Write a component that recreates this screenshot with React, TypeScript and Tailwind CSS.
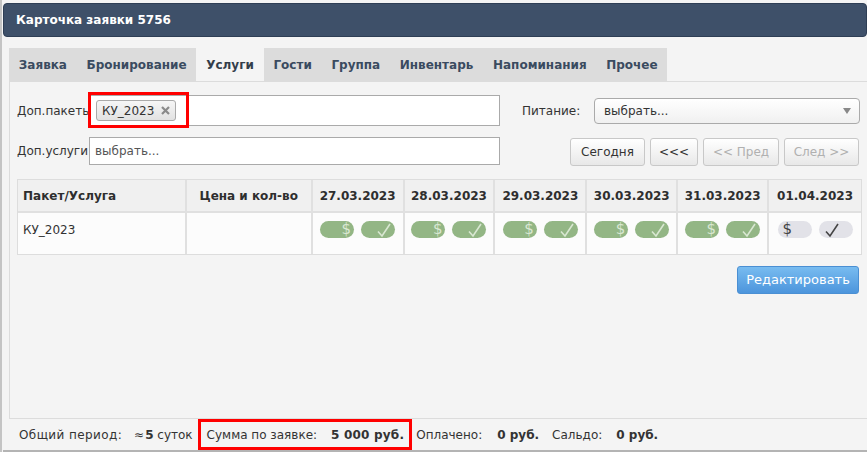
import React from "react";

const tabs = ["Заявка", "Бронирование", "Услуги", "Гости", "Группа", "Инвентарь", "Напоминания", "Прочее"];
const dates = ["27.03.2023", "28.03.2023", "29.03.2023", "30.03.2023", "31.03.2023", "01.04.2023"];
const dateWidths = ["w-[92px]", "w-[91px]", "w-[92px]", "w-[91px]", "w-[91px]", "w-[92px]"];

function Pill({ on, kind }: { on: boolean; kind: "pay" | "check" }) {
  const base = on ? "bg-[#93b685] text-[#d9e7d2]" : "bg-[#e2e2e8] text-[#444]";
  if (kind === "pay") {
    return (
      <span className={`relative flex h-[17px] w-[34px] items-center rounded-full ${base} overflow-hidden`}>
        <span className={`absolute ${on ? "right-[3px]" : "left-[5px]"} top-[-1px] text-[15px] leading-[18px]`}>$</span>
      </span>
    );
  }
  return (
    <span className={`relative flex h-[17px] w-[34px] items-center rounded-full ${base} overflow-hidden`}>
      <svg
        className={`absolute ${on ? "right-[3px]" : "left-[5px]"} top-[1px]`}
        width="16"
        height="16"
        viewBox="0 0 16 16"
        fill="none"
        stroke="currentColor"
        strokeWidth="1.6"
      >
        <path d="M2 9.5 L6 14 L14 2" />
      </svg>
    </span>
  );
}

function Btn({ children, disabled, w }: { children: React.ReactNode; disabled?: boolean; w: string }) {
  return (
    <button
      className={`${w} h-[28px] rounded-[3px] border border-[#c8c8c8] bg-gradient-to-b from-[#ffffff] to-[#e8e8e8] text-[12px] ${
        disabled ? "text-[#b0b0b0]" : "text-[#333]"
      }`}
    >
      {children}
    </button>
  );
}

export default function App() {
  return (
    <div
      className="w-[867px] h-[452px] overflow-hidden bg-[#f4f4f4] border-l-2 border-[#c4c4c4] pt-[3px] pl-[1px] text-[#333]"
      style={{ fontFamily: '"DejaVu Sans", Verdana, sans-serif' }}
    >
      {/* Header */}
      <div className="h-[34px] rounded-[4px] border border-[#2e3e55] bg-[#3e5069] flex items-center pl-[12px]">
        <span className="text-white font-bold text-[12px]">Карточка заявки 5756</span>
      </div>

      <div className="pl-[6px] mt-[11px]">
        {/* Tabs */}
        <div className="flex h-[34px] border-b border-[#dcdcdc]">
          <div className="flex bg-[#dcdcdc]">
            {tabs.map((t) => (
              <div
                key={t}
                className={`flex items-center px-[9.8px] text-[12px] font-bold ${
                  t === "Услуги" ? "bg-[#f4f4f4] text-[#333d4a]" : "text-[#3a4b60]"
                }`}
              >
                {t}
              </div>
            ))}
          </div>
        </div>

        {/* Panel */}
        <div className="h-[337px] border-l border-b border-[#dcdcdc] pl-[7px] pr-[6px] pt-[13px]">
          {/* Row 1 */}
          <div className="flex items-center h-[31px]">
            <div className="w-[72px] overflow-hidden whitespace-nowrap text-[12px]">Доп.пакеты</div>
            <div className="relative w-[411px] h-[31px] border border-[#aaaaaa] bg-white flex items-center pl-[6px]">
              <span className="flex items-center gap-[7px] h-[21px] rounded-[3px] border border-[#aaaaaa] bg-gradient-to-b from-[#f6f6f6] to-[#e2e2e2] pl-[5px] pr-[5px] text-[12px]">
                КУ_2023
                <svg width="9" height="9" viewBox="0 0 9 9" stroke="#8a8a8a" strokeWidth="2.2">
                  <path d="M1 1 L8 8 M8 1 L1 8" />
                </svg>
              </span>
              <div className="absolute left-[-2px] top-[-4px] w-[101px] h-[36px] border-[3px] border-[#f00]" />
            </div>
            <div className="ml-[22px] text-[12px] w-[72px]">Питание:</div>
            <div className="flex items-center justify-between w-[266px] h-[26px] rounded-[4px] border border-[#aaaaaa] bg-gradient-to-b from-white to-[#f0f0f0] pl-[9px] pr-[8px] text-[12px]">
              <span>выбрать...</span>
              <span className="w-0 h-0 border-l-[4px] border-r-[4px] border-t-[6px] border-l-transparent border-r-transparent border-t-[#888]" />
            </div>
          </div>

          {/* Row 2 */}
          <div className="flex items-center mt-[10px] h-[29px]">
            <div className="w-[72px] overflow-hidden whitespace-nowrap text-[12px]">Доп.услуги</div>
            <div className="w-[411px] h-[28px] border border-[#aaaaaa] bg-white flex items-center pl-[5px] text-[12px] text-[#555]">
              выбрать...
            </div>
            <div className="ml-auto flex gap-[5px] pr-[2px] pt-[2px]">
              <Btn w="w-[75px]">Сегодня</Btn>
              <Btn w="w-[48px]">&lt;&lt;&lt;</Btn>
              <Btn w="w-[76px]" disabled>
                &lt;&lt; Пред
              </Btn>
              <Btn w="w-[75px]" disabled>
                След &gt;&gt;
              </Btn>
            </div>
          </div>

          {/* Table */}
          <div className="mt-[14px] w-[845px] border border-[#dddddd]">
            <div className="flex h-[33px] bg-[#f0f0f0] border-b-2 border-[#e0e0e0] text-[12px] font-bold text-[#2e2e2e]">
              <div className="w-[169px] flex items-center pl-[5px] border-r-2 border-[#e0e0e0]">Пакет/Услуга</div>
              <div className="w-[126px] flex items-center justify-center border-r-2 border-[#e0e0e0]">Цена и кол-во</div>
              {dates.map((d, i) => (
                <div
                  key={d}
                  className={`${dateWidths[i]} flex items-center justify-center ${i < 5 ? "border-r-2 border-[#e0e0e0]" : ""}`}
                >
                  {d}
                </div>
              ))}
            </div>
            <div className="flex h-[41px] bg-[#fcfcfc] text-[12px]">
              <div className="w-[169px] pl-[5px] pt-[8px] border-r-2 border-[#e0e0e0]">КУ_2023</div>
              <div className="w-[126px] border-r-2 border-[#e0e0e0]" />
              {dates.map((d, i) => (
                <div
                  key={d}
                  className={`${dateWidths[i]} flex justify-center gap-[7px] pt-[8px] ${i < 5 ? "border-r-2 border-[#e0e0e0]" : ""}`}
                >
                  <Pill on={i < 5} kind="pay" />
                  <Pill on={i < 5} kind="check" />
                </div>
              ))}
            </div>
          </div>

          <div className="flex justify-end mt-[11px] pr-[2px]">
            <button className="w-[122px] h-[28px] rounded-[3px] border border-[#4a8fd3] bg-gradient-to-b from-[#78bcf0] to-[#4c95dc] text-white text-[13px]">
              Редактировать
            </button>
          </div>
        </div>
      </div>

      {/* Footer */}
      <div className="flex items-stretch h-[33px] border-b-2 border-[#b4b4b4] text-[12px] text-[#333] pl-[16px]">
        <span className="flex items-center tracking-[0.4px]">Общий период:</span>
        <span className="flex items-center ml-[12px]">
          ≈<b className="ml-[1px]">5</b>&nbsp;суток
        </span>
        <span className="flex items-center ml-[5px] border-[3px] border-[#f00] pl-[6px] pr-[5px]">
          Сумма по заявке:<b className="ml-[14px] tracking-[0.2px]">5 000 руб.</b>
        </span>
        <span className="flex items-center ml-[4px]">Оплачено:</span>
        <b className="flex items-center ml-[15px]">0 руб.</b>
        <span className="flex items-center ml-[13px]">Сальдо:</span>
        <b className="flex items-center ml-[14px]">0 руб.</b>
      </div>
    </div>
  );
}
